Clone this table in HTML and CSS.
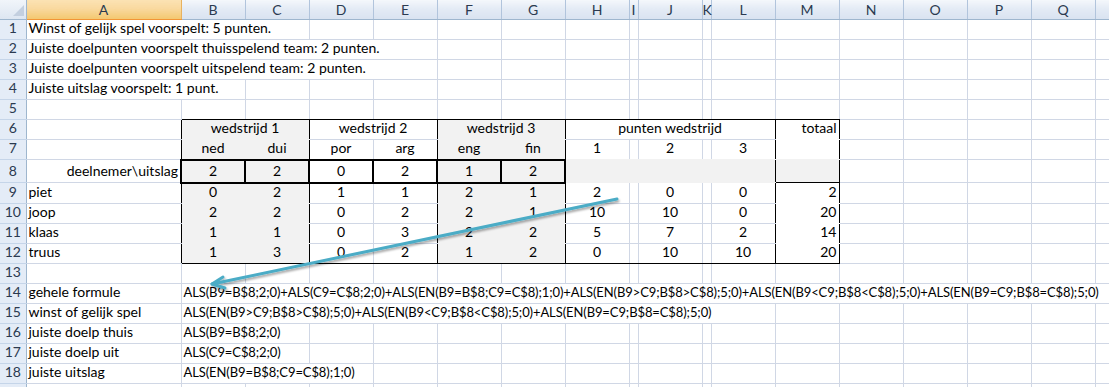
FILE: index.html
```html
<!DOCTYPE html>
<html lang="nl">
<head>
<meta charset="utf-8">
<title>Voorspellingen</title>
<link rel="stylesheet" href="styles.css">
</head>
<body>
<div class="wrap">
<table class="sheet">
<colgroup>
<col class="w-rh"><col class="w-a">
<col class="w-d"><col class="w-d"><col class="w-d"><col class="w-d"><col class="w-d"><col class="w-d"><col class="w-d">
<col class="w-n"><col class="w-d"><col class="w-n">
<col class="w-d"><col class="w-d"><col class="w-d"><col class="w-d"><col class="w-d"><col class="w-d"><col class="w-d">
</colgroup>
<thead>
<tr class="hdr">
<th class="corner"><svg class="tri" width="11" height="11" viewBox="0 0 11 11"><polygon points="11,0 11,11 0,11" fill="#c3cfdf"/></svg></th>
<th class="ch sel">A</th><th class="ch">B</th><th class="ch">C</th><th class="ch">D</th><th class="ch">E</th><th class="ch">F</th><th class="ch">G</th><th class="ch">H</th><th class="ch">I</th><th class="ch">J</th><th class="ch">K</th><th class="ch">L</th><th class="ch">M</th><th class="ch">N</th><th class="ch">O</th><th class="ch">P</th><th class="ch">Q</th><th class="ch">R</th>
</tr>
</thead>
<tbody>
<tr>
<th class="rh">1</th>
<td colspan="3">Winst of gelijk spel voorspelt: 5 punten.</td>
<td></td><td></td><td></td><td></td><td></td><td></td><td></td><td></td><td></td><td></td><td></td><td></td><td></td><td></td><td></td>
</tr>
<tr>
<th class="rh">2</th>
<td colspan="5">Juiste doelpunten voorspelt thuisspelend team: 2 punten.</td>
<td></td><td></td><td></td><td></td><td></td><td></td><td></td><td></td><td></td><td></td><td></td><td></td><td></td>
</tr>
<tr>
<th class="rh">3</th>
<td colspan="5">Juiste doelpunten voorspelt uitspelend team: 2 punten.</td>
<td></td><td></td><td></td><td></td><td></td><td></td><td></td><td></td><td></td><td></td><td></td><td></td><td></td>
</tr>
<tr>
<th class="rh">4</th>
<td colspan="2">Juiste uitslag voorspelt: 1 punt.</td>
<td></td><td></td><td></td><td></td><td></td><td></td><td></td><td></td><td></td><td></td><td></td><td></td><td></td><td></td><td></td><td></td>
</tr>
<tr>
<th class="rh">5</th>
<td></td>
<td class="bk"></td><td class="bk"></td><td class="bk"></td><td class="bk"></td><td class="bk"></td><td class="bk"></td><td class="bk"></td><td class="bk"></td><td class="bk"></td><td class="bk"></td><td class="bk"></td><td class="bk"></td>
<td></td><td></td><td></td><td></td><td></td>
</tr>
<tr>
<th class="rh">6</th>
<td class="rk"></td>
<td colspan="2" class="gray c rk bg">wedstrijd 1</td>
<td colspan="2" class="c rk">wedstrijd 2</td>
<td colspan="2" class="gray c rk bg">wedstrijd 3</td>
<td colspan="5" class="c rk">punten wedstrijd</td>
<td class="rt rk bw">totaal</td>
<td></td><td></td><td></td><td></td><td></td>
</tr>
<tr>
<th class="rh">7</th>
<td class="rk"></td>
<td class="gray c rg b2">ned</td><td class="gray c rk b2">dui</td>
<td class="c b2">por</td><td class="c rk b2">arg</td>
<td class="gray c rg b2">eng</td><td class="gray c rk b2">fin</td>
<td class="c bg">1</td><td class="bg"></td><td class="c bg">2</td><td class="bg"></td><td class="c rk bg">3</td>
<td class="rk bg"></td>
<td></td><td></td><td></td><td></td><td></td>
</tr>
<tr class="r8">
<th class="rh">8</th>
<td class="rt r2">deelnemer\uitslag</td>
<td class="gray c r2 b2">2</td><td class="gray c r2 b2">2</td>
<td class="c r2 b2">0</td><td class="c r2 b2">2</td>
<td class="gray c r2 b2">1</td><td class="gray c r2 b2">2</td>
<td class="gray rg bg"></td><td class="gray rg bg"></td><td class="gray rg bg"></td><td class="gray rg bg"></td><td class="gray rk bg"></td>
<td class="gray rk bk"></td>
<td></td><td></td><td></td><td></td><td></td>
</tr>
<tr>
<th class="rh">9</th>
<td class="rk">piet</td>
<td class="gray c rg bg">0</td><td class="gray c rk bg">2</td>
<td class="c">1</td><td class="c rk">1</td>
<td class="gray c rg bg">2</td><td class="gray c rk bg">1</td>
<td class="c">2</td><td></td><td class="c">0</td><td></td><td class="c rk">0</td>
<td class="rt rk bw">2</td>
<td></td><td></td><td></td><td></td><td></td>
</tr>
<tr>
<th class="rh">10</th>
<td class="rk">joop</td>
<td class="gray c rg bg">2</td><td class="gray c rk bg">2</td>
<td class="c">0</td><td class="c rk">2</td>
<td class="gray c rg bg">2</td><td class="gray c rk bg">1</td>
<td class="c">10</td><td></td><td class="c">10</td><td></td><td class="c rk">0</td>
<td class="rt rk bw">20</td>
<td></td><td></td><td></td><td></td><td></td>
</tr>
<tr>
<th class="rh">11</th>
<td class="rk">klaas</td>
<td class="gray c rg bg">1</td><td class="gray c rk bg">1</td>
<td class="c">0</td><td class="c rk">3</td>
<td class="gray c rg bg">2</td><td class="gray c rk bg">2</td>
<td class="c">5</td><td></td><td class="c">7</td><td></td><td class="c rk">2</td>
<td class="rt rk bw">14</td>
<td></td><td></td><td></td><td></td><td></td>
</tr>
<tr>
<th class="rh">12</th>
<td class="rk">truus</td>
<td class="gray c rg bk">1</td><td class="gray c rk bk">3</td>
<td class="c bk">0</td><td class="c rk bk">2</td>
<td class="gray c rg bk">1</td><td class="gray c rk bk">2</td>
<td class="c bk">0</td><td class="bk"></td><td class="c bk">10</td><td class="bk"></td><td class="c rk bk">10</td>
<td class="rt rk bk">20</td>
<td></td><td></td><td></td><td></td><td></td>
</tr>
<tr>
<th class="rh">13</th>
<td></td><td></td><td></td><td></td><td></td><td></td><td></td><td></td><td></td><td></td><td></td><td></td><td></td><td></td><td></td><td></td><td></td><td></td>
</tr>
<tr>
<th class="rh">14</th>
<td>gehele formule</td>
<td colspan="17" class="formula">ALS(B9=B$8;2;0)+ALS(C9=C$8;2;0)+ALS(EN(B9=B$8;C9=C$8);1;0)+ALS(EN(B9&gt;C9;B$8&gt;C$8);5;0)+ALS(EN(B9&lt;C9;B$8&lt;C$8);5;0)+ALS(EN(B9=C9;B$8=C$8);5;0)</td>
</tr>
<tr>
<th class="rh">15</th>
<td>winst of gelijk spel</td>
<td colspan="11" class="formula">ALS(EN(B9&gt;C9;B$8&gt;C$8);5;0)+ALS(EN(B9&lt;C9;B$8&lt;C$8);5;0)+ALS(EN(B9=C9;B$8=C$8);5;0)</td>
<td></td><td></td><td></td><td></td><td></td><td></td>
</tr>
<tr>
<th class="rh">16</th>
<td>juiste doelp thuis</td>
<td colspan="2" class="formula">ALS(B9=B$8;2;0)</td>
<td></td><td></td><td></td><td></td><td></td><td></td><td></td><td></td><td></td><td></td><td></td><td></td><td></td><td></td><td></td>
</tr>
<tr>
<th class="rh">17</th>
<td>juiste doelp uit</td>
<td colspan="2" class="formula">ALS(C9=C$8;2;0)</td>
<td></td><td></td><td></td><td></td><td></td><td></td><td></td><td></td><td></td><td></td><td></td><td></td><td></td><td></td><td></td>
</tr>
<tr>
<th class="rh">18</th>
<td>juiste uitslag</td>
<td colspan="3" class="formula">ALS(EN(B9=B$8;C9=C$8);1;0)</td>
<td></td><td></td><td></td><td></td><td></td><td></td><td></td><td></td><td></td><td></td><td></td><td></td><td></td><td></td><td></td>
</tr>
<tr>
<th class="rh">19</th>
<td></td><td></td><td></td><td></td><td></td><td></td><td></td><td></td><td></td><td></td><td></td><td></td><td></td><td></td><td></td><td></td><td></td><td></td>
</tr>
</tbody>
</table>
<svg class="arrow" width="1109" height="387" viewBox="0 0 1109 387">
<defs>
<filter id="sh" x="-10%" y="-50%" width="120%" height="200%">
<feDropShadow dx="1" dy="2" stdDeviation="1.2" flood-color="#000" flood-opacity="0.35"/>
</filter>
</defs>
<g filter="url(#sh)" stroke="#4bacc6" stroke-width="3" fill="none" stroke-linecap="round" stroke-linejoin="round">
<line x1="617" y1="199" x2="212" y2="284"/>
<polyline points="223,277 212,284 225,288"/>
</g>
</svg>
</div>
</body>
</html>
```
FILE: styles.css
```css
html, body {
  margin: 0;
  padding: 0;
  background: #ffffff;
}

.wrap {
  position: relative;
  width: 1109px;
  height: 387px;
  overflow: hidden;
}

.sheet {
  border-collapse: collapse;
  table-layout: fixed;
  width: 1159px;
  font-family: "Lato", "Liberation Sans", sans-serif;
  font-size: 14px;
  color: #000;
}

.w-rh { width: 26px; }
.w-a { width: 155px; }
.w-d { width: 64px; }
.w-n { width: 9px; }

.sheet tbody tr { height: 20px; }
.sheet tbody tr.r8 { height: 22px; }

.sheet td {
  border: none;
  border-right: 1px solid #d0d7e5;
  border-bottom: 1px solid #d0d7e5;
  height: 16px;
  padding: 0 2px 3px 2px;
  line-height: 16px;
  vertical-align: bottom;
  white-space: nowrap;
  overflow: hidden;
}

.sheet tr.r8 td {
  height: 18px;
}

.sheet td.formula {
  font-size: 13px;
  letter-spacing: -0.1px;
}

/* headers */
.hdr { height: 19px; }

.hdr th {
  height: 18px;
  padding: 0;
  font-weight: normal;
  font-size: 14px;
  line-height: 17px;
  color: #2b3a50;
}

.ch {
  background: linear-gradient(#f4f7fb, #e4ebf5 45%, #d9e3f0);
  border-right: 1px solid #b1c4dc;
  border-bottom: 1px solid #9eb6ce;
  text-align: center;
  vertical-align: middle;
}

.ch.sel {
  background: linear-gradient(#fbe2b3, #f9d99f 45%, #f3c870);
  border-bottom: 1px solid #f29536;
  border-right: 1px solid #e8b25f;
}

.corner {
  background: linear-gradient(#f1f5fa, #dde6f1);
  border-right: 1px solid #9eb6ce;
  border-bottom: 1px solid #9eb6ce;
  text-align: right;
  vertical-align: bottom;
  line-height: 0;
}

.tri {
  display: block;
  margin: 4px 2px 3px auto;
}

.rh {
  background: #e4ecf7;
  border-right: 1px solid #9eb6ce;
  border-bottom: 1px solid #c5d5e9;
  font-weight: normal;
  font-size: 14px;
  color: #2b3a50;
  text-align: center;
  vertical-align: bottom;
  padding: 0 0 3px 0;
  height: 16px;
  line-height: 16px;
}

/* alignment */
.c { text-align: center; }
.rt { text-align: right; }

/* fills */
.gray { background: #f2f2f2; }

/* right borders */
.sheet td.rk { border-right: 1px solid #000; }
.sheet td.rg { border-right-color: #f2f2f2; }
.sheet td.r2 { border-right: 2px solid #000; }

/* bottom borders */
.sheet td.bk { border-bottom: 1px solid #000; }
.sheet td.bg { border-bottom-color: #f2f2f2; }
.sheet td.bw { border-bottom-color: #ffffff; }
.sheet td.b2 { border-bottom: 2px solid #000; }

.arrow {
  position: absolute;
  left: 0;
  top: 0;
  pointer-events: none;
}
```
